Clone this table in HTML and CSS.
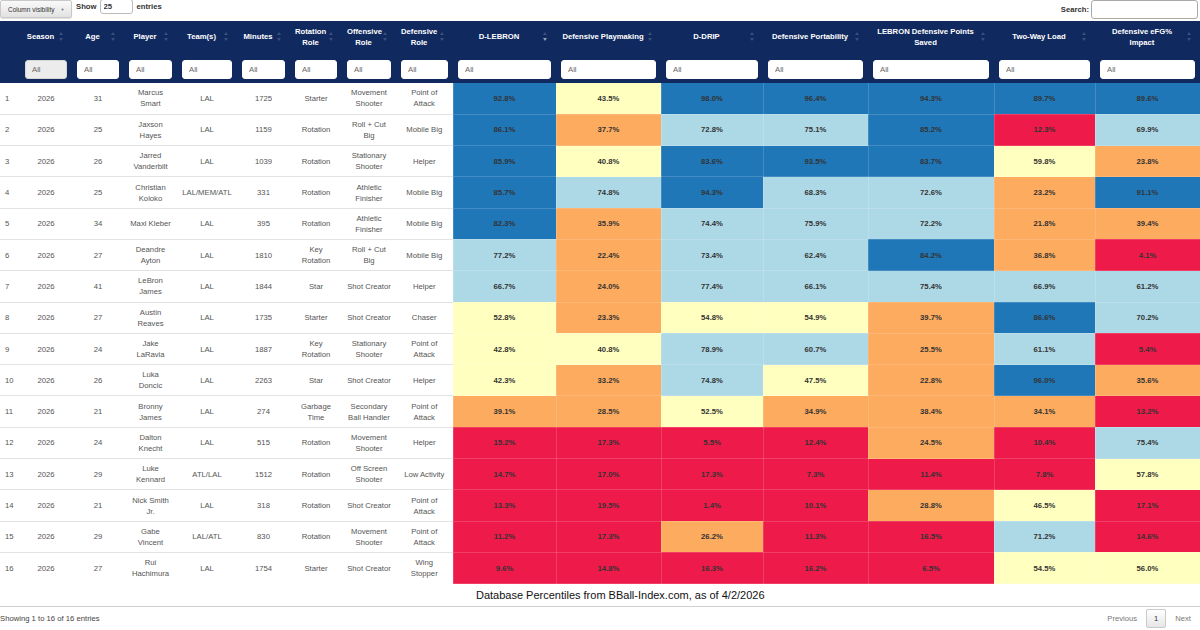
FILE: index.html
```html
<!DOCTYPE html>
<html>
<head>
<meta charset="utf-8">
<link rel="stylesheet" href="styles.css">
</head>
<body>
<div class="toolbar">
  <div class="tb-left">
    <button class="colvis">Column visibility <span class="caret">▼</span></button>
    <label class="length">Show <input class="len-input" value="25"> entries</label>
  </div>
  <label class="search">Search: <input class="search-input"></label>
</div>
<table class="dt">
  <caption>Database Percentiles from BBall-Index.com, as of 4/2/2026</caption>
  <colgroup>
    <col style="width:20px"><col style="width:52px"><col style="width:52px"><col style="width:53px"><col style="width:60px"><col style="width:53px"><col style="width:52px"><col style="width:54px"><col style="width:57px">
    <col style="width:103px"><col style="width:105px"><col style="width:102px"><col style="width:105px"><col style="width:126px"><col style="width:101px"><col style="width:105px">
  </colgroup>
  <thead>
    <tr class="hdr">
      <th></th>
      <th>Season<span class="sort"></span></th>
      <th>Age<span class="sort"></span></th>
      <th>Player<span class="sort"></span></th>
      <th>Team(s)<span class="sort"></span></th>
      <th>Minutes<span class="sort"></span></th>
      <th>Rotation Role<span class="sort"></span></th>
      <th>Offensive Role<span class="sort"></span></th>
      <th>Defensive Role<span class="sort"></span></th>
      <th>D-LEBRON<span class="sort desc"></span></th>
      <th>Defensive Playmaking<span class="sort"></span></th>
      <th>D-DRIP<span class="sort"></span></th>
      <th>Defensive Portability<span class="sort"></span></th>
      <th>LEBRON Defensive Points Saved<span class="sort"></span></th>
      <th>Two-Way Load<span class="sort"></span></th>
      <th>Defensive eFG% Impact<span class="sort"></span></th>
    </tr>
    <tr class="filters">
      <td></td>
      <td><input class="flt flt-off" placeholder="All"></td>
      <td><input class="flt" placeholder="All"></td>
      <td><input class="flt" placeholder="All"></td>
      <td><input class="flt" placeholder="All"></td>
      <td><input class="flt" placeholder="All"></td>
      <td><input class="flt" placeholder="All"></td>
      <td><input class="flt" placeholder="All"></td>
      <td><input class="flt" placeholder="All"></td>
      <td><input class="flt" placeholder="All"></td>
      <td><input class="flt" placeholder="All"></td>
      <td><input class="flt" placeholder="All"></td>
      <td><input class="flt" placeholder="All"></td>
      <td><input class="flt" placeholder="All"></td>
      <td><input class="flt" placeholder="All"></td>
      <td><input class="flt" placeholder="All"></td>
    </tr>
  </thead>
  <tbody>
    <tr><td class="idx">1</td><td>2026</td><td>31</td><td class="pl">Marcus Smart</td><td class="tm">LAL</td><td>1725</td><td>Starter</td><td class="off">Movement Shooter</td><td>Point of Attack</td>
      <td class="m c1">92.8%</td><td class="m c3">43.5%</td><td class="m c1">98.0%</td><td class="m c1">96.4%</td><td class="m c1">94.3%</td><td class="m c1">89.7%</td><td class="m c1">89.6%</td></tr>
    <tr><td class="idx">2</td><td>2026</td><td>25</td><td class="pl">Jaxson Hayes</td><td class="tm">LAL</td><td>1159</td><td>Rotation</td><td class="off">Roll + Cut Big</td><td>Mobile Big</td>
      <td class="m c1">86.1%</td><td class="m c4">37.7%</td><td class="m c2">72.8%</td><td class="m c2">75.1%</td><td class="m c1">85.2%</td><td class="m c5">12.3%</td><td class="m c2">69.9%</td></tr>
    <tr><td class="idx">3</td><td>2026</td><td>26</td><td class="pl">Jarred Vanderbilt</td><td class="tm">LAL</td><td>1039</td><td>Rotation</td><td class="off">Stationary Shooter</td><td>Helper</td>
      <td class="m c1">85.9%</td><td class="m c3">40.8%</td><td class="m c1">83.6%</td><td class="m c1">93.5%</td><td class="m c1">83.7%</td><td class="m c3">59.8%</td><td class="m c4">23.8%</td></tr>
    <tr><td class="idx">4</td><td>2026</td><td>25</td><td class="pl">Christian Koloko</td><td class="tm">LAL/MEM/ATL</td><td>331</td><td>Rotation</td><td class="off">Athletic Finisher</td><td>Mobile Big</td>
      <td class="m c1">85.7%</td><td class="m c2">74.8%</td><td class="m c1">94.3%</td><td class="m c2">68.3%</td><td class="m c2">72.6%</td><td class="m c4">23.2%</td><td class="m c1">91.1%</td></tr>
    <tr><td class="idx">5</td><td>2026</td><td>34</td><td class="pl">Maxi Kleber</td><td class="tm">LAL</td><td>395</td><td>Rotation</td><td class="off">Athletic Finisher</td><td>Mobile Big</td>
      <td class="m c1">82.3%</td><td class="m c4">35.9%</td><td class="m c2">74.4%</td><td class="m c2">75.9%</td><td class="m c2">72.2%</td><td class="m c4">21.8%</td><td class="m c4">39.4%</td></tr>
    <tr><td class="idx">6</td><td>2026</td><td>27</td><td class="pl">Deandre Ayton</td><td class="tm">LAL</td><td>1810</td><td>Key Rotation</td><td class="off">Roll + Cut Big</td><td>Mobile Big</td>
      <td class="m c2">77.2%</td><td class="m c4">22.4%</td><td class="m c2">73.4%</td><td class="m c2">62.4%</td><td class="m c1">84.2%</td><td class="m c4">36.8%</td><td class="m c5">4.1%</td></tr>
    <tr><td class="idx">7</td><td>2026</td><td>41</td><td class="pl">LeBron James</td><td class="tm">LAL</td><td>1844</td><td>Star</td><td class="off">Shot Creator</td><td>Helper</td>
      <td class="m c2">66.7%</td><td class="m c4">24.0%</td><td class="m c2">77.4%</td><td class="m c2">66.1%</td><td class="m c2">75.4%</td><td class="m c2">66.9%</td><td class="m c2">61.2%</td></tr>
    <tr><td class="idx">8</td><td>2026</td><td>27</td><td class="pl">Austin Reaves</td><td class="tm">LAL</td><td>1735</td><td>Starter</td><td class="off">Shot Creator</td><td>Chaser</td>
      <td class="m c3">52.8%</td><td class="m c4">23.3%</td><td class="m c3">54.8%</td><td class="m c3">54.9%</td><td class="m c4">39.7%</td><td class="m c1">86.6%</td><td class="m c2">70.2%</td></tr>
    <tr><td class="idx">9</td><td>2026</td><td>24</td><td class="pl">Jake LaRavia</td><td class="tm">LAL</td><td>1887</td><td>Key Rotation</td><td class="off">Stationary Shooter</td><td>Point of Attack</td>
      <td class="m c3">42.8%</td><td class="m c3">40.8%</td><td class="m c2">78.9%</td><td class="m c2">60.7%</td><td class="m c4">25.5%</td><td class="m c2">61.1%</td><td class="m c5">5.4%</td></tr>
    <tr><td class="idx">10</td><td>2026</td><td>26</td><td class="pl">Luka Doncic</td><td class="tm">LAL</td><td>2263</td><td>Star</td><td class="off">Shot Creator</td><td>Helper</td>
      <td class="m c3">42.3%</td><td class="m c4">33.2%</td><td class="m c2">74.8%</td><td class="m c3">47.5%</td><td class="m c4">22.8%</td><td class="m c1">96.0%</td><td class="m c4">35.6%</td></tr>
    <tr><td class="idx">11</td><td>2026</td><td>21</td><td class="pl">Bronny James</td><td class="tm">LAL</td><td>274</td><td>Garbage Time</td><td class="off">Secondary Ball Handler</td><td>Point of Attack</td>
      <td class="m c4">39.1%</td><td class="m c4">28.5%</td><td class="m c3">52.5%</td><td class="m c4">34.9%</td><td class="m c4">38.4%</td><td class="m c4">34.1%</td><td class="m c5">13.2%</td></tr>
    <tr><td class="idx">12</td><td>2026</td><td>24</td><td class="pl">Dalton Knecht</td><td class="tm">LAL</td><td>515</td><td>Rotation</td><td class="off">Movement Shooter</td><td>Helper</td>
      <td class="m c5">15.2%</td><td class="m c5">17.3%</td><td class="m c5">5.5%</td><td class="m c5">12.4%</td><td class="m c4">24.5%</td><td class="m c5">10.4%</td><td class="m c2">75.4%</td></tr>
    <tr><td class="idx">13</td><td>2026</td><td>29</td><td class="pl">Luke Kennard</td><td class="tm">ATL/LAL</td><td>1512</td><td>Rotation</td><td class="off">Off Screen Shooter</td><td>Low Activity</td>
      <td class="m c5">14.7%</td><td class="m c5">17.0%</td><td class="m c5">17.3%</td><td class="m c5">7.3%</td><td class="m c5">11.4%</td><td class="m c5">7.8%</td><td class="m c3">57.8%</td></tr>
    <tr><td class="idx">14</td><td>2026</td><td>21</td><td class="pl">Nick Smith Jr.</td><td class="tm">LAL</td><td>318</td><td>Rotation</td><td class="off">Shot Creator</td><td>Point of Attack</td>
      <td class="m c5">13.3%</td><td class="m c5">19.5%</td><td class="m c5">1.4%</td><td class="m c5">10.1%</td><td class="m c4">28.8%</td><td class="m c3">46.5%</td><td class="m c5">17.1%</td></tr>
    <tr><td class="idx">15</td><td>2026</td><td>29</td><td class="pl">Gabe Vincent</td><td class="tm">LAL/ATL</td><td>830</td><td>Rotation</td><td class="off">Movement Shooter</td><td>Point of Attack</td>
      <td class="m c5">11.2%</td><td class="m c5">17.3%</td><td class="m c4">26.2%</td><td class="m c5">11.3%</td><td class="m c5">16.5%</td><td class="m c2">71.2%</td><td class="m c5">14.6%</td></tr>
    <tr><td class="idx">16</td><td>2026</td><td>27</td><td class="pl">Rui Hachimura</td><td class="tm">LAL</td><td>1754</td><td>Starter</td><td class="off">Shot Creator</td><td>Wing Stopper</td>
      <td class="m c5">9.6%</td><td class="m c5">14.8%</td><td class="m c5">16.3%</td><td class="m c5">16.2%</td><td class="m c5">6.5%</td><td class="m c3">54.5%</td><td class="m c3">56.0%</td></tr>
  </tbody>
</table>
<div class="footer">
  <div class="info">Showing 1 to 16 of 16 entries</div>
  <div class="paginate">
    <span class="pg">Previous</span>
    <span class="pg cur">1</span>
    <span class="pg">Next</span>
  </div>
</div>
</body>
</html>
```
FILE: styles.css
```css
* { box-sizing: border-box; }
html, body { margin: 0; padding: 0; background: #fff; }
body {
  width: 1200px;
  height: 630px;
  overflow: hidden;
  font-family: "Liberation Sans", Arial, sans-serif;
  font-size: 7.7px;
  color: #333;
}

/* toolbar */
.toolbar {
  height: 21px;
  display: flex;
  justify-content: space-between;
  align-items: flex-start;
}
.tb-left { display: flex; align-items: flex-start; }
.colvis {
  height: 18px;
  width: 72px;
  padding: 0 0 0 7px;
  margin: 0;
  text-align: left;
  font-family: inherit;
  font-size: 6.5px;
  color: #333;
  border: 1px solid #c8c8c8;
  border-radius: 2px;
  background: linear-gradient(#fafafa, #e2e2e2);
  box-shadow: 0 1px 1px rgba(0,0,0,.12);
  white-space: nowrap;
}
.caret { font-size: 4px; color: #666; margin-left: 4px; vertical-align: 1px; }
.length {
  margin-left: 4px;
  font-weight: bold;
  line-height: 14px;
  display: flex;
  align-items: center;
  gap: 3px;
  margin-top: -1px;
}
.len-input {
  width: 33px;
  height: 15px;
  padding: 0 3px;
  border: 1px solid #bbb;
  border-radius: 3px;
  font-family: inherit;
  font-size: 7.7px;
  font-weight: bold;
  color: #333;
  margin-right: 1px;
}
.search {
  font-weight: bold;
  display: flex;
  align-items: center;
  gap: 2px;
  height: 19px;
  margin-right: 2px;
}
.search-input {
  width: 107px;
  height: 19px;
  border: 1px solid #aaa;
  border-radius: 3px;
  font-family: inherit;
}

/* table */
.dt {
  width: 1200px;
  table-layout: fixed;
  border-collapse: collapse;
  border-spacing: 0;
}
.dt caption {
  caption-side: bottom;
  height: 22px;
  line-height: 22px;
  font-size: 11px;
  color: #111;
  text-align: center;
  padding-left: 40px;
}
.hdr { height: 31px; }
.hdr th {
  position: relative;
  background: #10295f;
  color: #fff;
  font-weight: bold;
  line-height: 11px;
  padding: 0 16px 0 5px;
  text-align: center;
  vertical-align: middle;
}
.sort {
  position: absolute;
  right: 8px;
  top: 50%;
  width: 5px;
  height: 9px;
  margin-top: -4.5px;
}
.sort::before, .sort::after {
  content: "";
  position: absolute;
  left: 0;
  border-left: 2.5px solid transparent;
  border-right: 2.5px solid transparent;
}
.sort::before { top: 0; border-bottom: 3.5px solid rgba(255,255,255,.18); }
.sort::after { bottom: 0; border-top: 3.5px solid rgba(255,255,255,.18); }
.sort.desc::after { border-top-color: rgba(255,255,255,.55); }

.filters { height: 31px; }
.filters td {
  background: #10295f;
  padding: 8px 5px 4px;
  vertical-align: top;
}
.flt {
  display: block;
  width: 100%;
  height: 19px;
  padding: 0 6px;
  margin: 0;
  border: 1px solid #fff;
  border-radius: 3px;
  background: #fff;
  font-family: inherit;
  font-size: 7.7px;
  color: #555;
}
.flt::placeholder { color: #666; }
.flt-off { background: #ececec; border-color: #d5d5d5; }

tbody tr { height: 31.3px; }
tbody td {
  padding: 0 5px;
  line-height: 11px;
  text-align: center;
  vertical-align: middle;
  color: #555;
  border-top: 1px solid #e2e2e2;
}
tbody tr:first-child td { border-top: 0; }
tbody td.idx { text-align: left; padding-left: 5px; padding-right: 0; }
tbody td.pl { padding: 0 6px; }
tbody td.tm { white-space: nowrap; padding: 0 2px; }
tbody td.off { padding: 0 4px; }
tbody td.m {
  font-weight: bold;
  color: #333;
  border: 1px solid rgba(255,255,255,.16);
}
.c1 { background: #1f77b8; }
.c2 { background: #add8e6; }
.c3 { background: #ffffbf; }
.c4 { background: #fdab5f; }
.c5 { background: #ee1a4a; }

/* footer */
.footer {
  border-top: 1px solid #cfcfcf;
  height: 23px;
  display: flex;
  justify-content: space-between;
  align-items: center;
  color: #444;
}
.paginate {
  display: flex;
  align-items: center;
  gap: 9px;
  padding-right: 9px;
}
.pg { color: #777; }
.pg.cur {
  width: 20px;
  height: 19px;
  line-height: 17px;
  text-align: center;
  color: #333;
  border: 1px solid #cacaca;
  border-radius: 2px;
  background: linear-gradient(#fff, #e6e6e6);
}
```
